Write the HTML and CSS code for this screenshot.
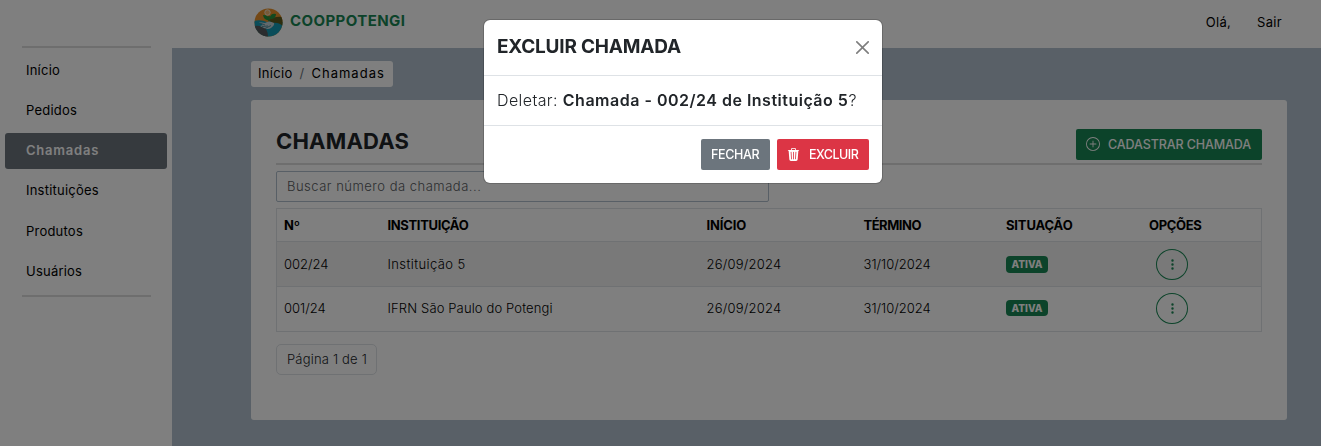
FILE: index.html
```html
<!DOCTYPE html>
<html lang="pt-BR">
<head>
<meta charset="utf-8">
<title>Chamadas - COOPPOTENGI</title>
<link rel="stylesheet" href="styles.css">
</head>
<body>
<div class="app">
  <aside class="sidebar">
    <hr class="rule">
    <nav class="menu">
      <a class="menu-item">Início</a>
      <a class="menu-item">Pedidos</a>
      <a class="menu-item active">Chamadas</a>
      <a class="menu-item">Instituições</a>
      <a class="menu-item">Produtos</a>
      <a class="menu-item">Usuários</a>
    </nav>
    <hr class="rule">
  </aside>
  <div class="page">
    <header class="topbar">
      <div class="brand">
        <svg class="logo" width="29" height="29" viewBox="0 0 29 29">
          <defs><clipPath id="disc"><circle cx="14.5" cy="14.5" r="14"/></clipPath></defs>
          <g clip-path="url(#disc)">
            <rect width="29" height="29" fill="#e8912a"/>
            <path d="M0 13Q6 11 13 14Q20 11 29 14V29H0z" fill="#159ab4"/>
            <path d="M0 18Q5 17 8 19Q14 20 14 29H0z" fill="#54585c"/>
            <path d="M15 12Q20 8 29 9V19Q26 14 18 15z" fill="#5c5a1c"/>
            <path d="M5 14L11 15Q15 12.500 20 15Q21 17 17 20Q14 22 10 20L6 18L9 17z" fill="#c3d3d8"/>
            <path d="M6 15L11 17M8 18.500L14 18M11 20.500L17 17.500" stroke="#4b8797" stroke-width=".9" fill="none"/>
            <path d="M15 13V8" stroke="#188038" stroke-width="1.400"/>
            <path d="M15.500 12Q10 13 9 7Q15 7 15.500 12zM15.500 11Q16 5 22 6Q22 11.500 15.500 11z" fill="#23923d"/>
            <circle cx="13.500" cy="4.500" r="2.700" fill="#f0b46c" stroke="#efe2cc"/>
          </g>
        </svg>
        <span class="brand-name">COOPPOTENGI</span>
      </div>
      <nav class="user-nav"><span>Olá,</span><a>Sair</a></nav>
    </header>
    <main class="content">
      <div class="breadcrumb"><span>Início</span><span class="slash">/</span><span class="current">Chamadas</span></div>
      <section class="card">
        <div class="card-head">
          <h1 class="title">CHAMADAS</h1>
          <button class="btn btn-success">
            <svg width="14" height="14" viewBox="0 0 16 16" fill="currentColor"><path d="M8 15A7 7 0 1 1 8 1a7 7 0 0 1 0 14m0 1A8 8 0 1 0 8 0a8 8 0 0 0 0 16"/><path d="M8 4a.5.5 0 0 1 .5.5v3h3a.5.5 0 0 1 0 1h-3v3a.5.5 0 0 1-1 0v-3h-3a.5.5 0 0 1 0-1h3v-3A.5.5 0 0 1 8 4"/></svg>
            <span>CADASTRAR CHAMADA</span>
          </button>
        </div>
        <div class="search">Buscar número da chamada...</div>
        <table class="table">
          <colgroup><col class="c-num"><col class="c-inst"><col class="c-start"><col class="c-end"><col class="c-status"><col></colgroup>
          <thead>
            <tr><th>Nº</th><th class="tight">INSTITUIÇÃO</th><th>INÍCIO</th><th class="tighter">TÉRMINO</th><th>SITUAÇÃO</th><th class="tight">OPÇÕES</th></tr>
          </thead>
          <tbody>
            <tr>
              <td>002/24</td><td class="wide">Instituição 5</td><td class="date">26/09/2024</td><td>31/10/2024</td>
              <td><span class="badge">ATIVA</span></td>
              <td><button class="more"><svg width="13" height="13" viewBox="0 0 16 16" fill="currentColor"><path d="M9.500 13a1.500 1.500 0 1 1-3 0 1.500 1.500 0 0 1 3 0m0-5a1.500 1.500 0 1 1-3 0 1.500 1.500 0 0 1 3 0m0-5a1.500 1.500 0 1 1-3 0 1.500 1.500 0 0 1 3 0"/></svg></button></td>
            </tr>
            <tr>
              <td>001/24</td><td class="name">IFRN São Paulo do Potengi</td><td class="date">26/09/2024</td><td>31/10/2024</td>
              <td><span class="badge">ATIVA</span></td>
              <td><button class="more"><svg width="13" height="13" viewBox="0 0 16 16" fill="currentColor"><path d="M9.500 13a1.500 1.500 0 1 1-3 0 1.500 1.500 0 0 1 3 0m0-5a1.500 1.500 0 1 1-3 0 1.500 1.500 0 0 1 3 0m0-5a1.500 1.500 0 1 1-3 0 1.500 1.500 0 0 1 3 0"/></svg></button></td>
            </tr>
          </tbody>
        </table>
        <div class="pager">Página 1 de 1</div>
      </section>
    </main>
  </div>
</div>
<div class="backdrop">
  <div class="modal">
    <div class="modal-head">
      <h2 class="modal-title">EXCLUIR CHAMADA</h2>
      <svg class="close" width="13" height="13" viewBox="0 0 16 16"><path d="M.293.293a1 1 0 0 1 1.414 0L8 6.586 14.293.293a1 1 0 1 1 1.414 1.414L9.414 8l6.293 6.293a1 1 0 0 1-1.414 1.414L8 9.414l-6.293 6.293a1 1 0 0 1-1.414-1.414L6.586 8 .293 1.707a1 1 0 0 1 0-1.414"/></svg>
    </div>
    <div class="modal-body">Deletar: <strong>Chamada - 002/24 de Instituição 5</strong>?</div>
    <div class="modal-foot">
      <button class="btn btn-secondary"><span>FECHAR</span></button>
      <button class="btn btn-danger">
        <svg width="13" height="13" viewBox="0 0 16 16" fill="currentColor"><path d="M11 1.500v1h3.500a.5.5 0 0 1 0 1h-.538l-.853 10.660A2 2 0 0 1 11.115 16h-6.230a2 2 0 0 1-1.994-1.840L2.038 3.500H1.500a.5.5 0 0 1 0-1H5v-1A1.500 1.500 0 0 1 6.500 0h3A1.500 1.500 0 0 1 11 1.500m-5 0v1h4v-1a.5.5 0 0 0-.5-.5h-3a.5.5 0 0 0-.5.5M4.500 5.029l.5 8.500a.5.5 0 1 0 .998-.06l-.5-8.500a.5.5 0 1 0-.998.06m6.530-.528a.5.5 0 0 0-.528.470l-.5 8.500a.5.5 0 0 0 .998.058l.5-8.500a.5.5 0 0 0-.470-.528M8 4.500a.5.5 0 0 0-.5.5v8.500a.5.5 0 0 0 1 0V5a.5.5 0 0 0-.5-.5"/></svg>
        <span>EXCLUIR</span>
      </button>
    </div>
  </div>
</div>
</body>
</html>
```

FILE: styles.css
```css
* { box-sizing: border-box; }
body {
  margin: 0;
  font: 400 13px/20px Inter, sans-serif;
  color: #000;
  overflow: hidden;
}
h1, h2 { margin: 0; }
button { font: inherit; margin: 0; }
svg { display: block; flex: none; }

.app { display: flex; height: 446px; }

/* Sidebar */
.sidebar { width: 172px; padding: 46px 5px 0; background: #fff; }
.rule { height: 2px; margin: 0 16px 0 17px; border: 0; background: #dcdcdc; }
.menu { display: flex; flex-direction: column; gap: 4.2px; padding: 4.500px 0 5.500px; letter-spacing: .22px; }
.menu-item { height: 36px; padding: 7.400px 21px; border-radius: 3px; }
.menu-item.active { background: #6c757d; color: #fff; font-weight: 600; letter-spacing: .78px; }

/* Top bar */
.page { flex: 1; display: flex; flex-direction: column; background: #b2c1ce; }
.topbar {
  display: flex; justify-content: space-between; align-items: center;
  height: 48px; padding: 0 39px 4px 82px; background: #fff;
}
.brand { display: flex; align-items: center; gap: 7px; }
.brand-name { padding-bottom: 3px; font-size: 15px; font-weight: 700; letter-spacing: .42px; color: #198754; }
.user-nav { display: flex; gap: 26px; letter-spacing: .3px; }

/* Content */
.content { display: flex; flex-direction: column; align-items: flex-start; padding: 13px 34px 26px 79px; flex: 1; }
.breadcrumb {
  display: flex; gap: 7px; width: 142px; height: 26px; padding: 2px 7px;
  border-radius: 3px; background: #fff; letter-spacing: .3px;
}
.breadcrumb .slash { color: #6c757d; }
.breadcrumb .current { letter-spacing: 1px; }
.card {
  align-self: stretch; flex: 1; margin-top: 13px; padding: 29px 25px 0;
  border-radius: 3px; background: #fff;
}
.card-head {
  display: flex; justify-content: space-between; align-items: flex-start;
  height: 36px; border-bottom: 2px solid #dcdcdc;
}
.title { font-size: 22px; line-height: 24px; font-weight: 700; letter-spacing: .2px; color: #212529; }
.search {
  width: 493px; height: 31px; margin: 6px 0; padding: 4px 10px;
  border: 1px solid #b0bfcc; border-radius: 2px;
  font-weight: 300; letter-spacing: .5px; color: #595c5f;
}

/* Buttons */
.btn {
  display: flex; align-items: center; height: 31px; padding: 0 10px;
  border: 0; border-radius: 2px; color: #fff;
  font-size: 12.500px; font-weight: 500; letter-spacing: -.37px; white-space: nowrap;
}
.btn-success { width: 186px; gap: 8px; background: #198754; letter-spacing: -.1px; }
.btn-success svg { margin-top: -2px; }
.btn-secondary { width: 69px; background: #6c757d; }
.btn-danger { width: 92px; gap: 9px; background: #dc3545; letter-spacing: -.5px; }

/* Table */
.table { width: 986px; border-collapse: collapse; table-layout: fixed; border: 1px solid #dee2e6; }
.c-num { width: 104px; }
.c-inst { width: 319px; }
.c-start { width: 157px; }
.c-end { width: 142.500px; }
.c-status { width: 143px; }
.table th, .table td { padding: 0 7px; text-align: left; vertical-align: middle; }
.table th { height: 33px; font-weight: 700; letter-spacing: -.15px; }
.table th.tight { letter-spacing: -.35px; }
.table th.tighter { letter-spacing: -.48px; }
.table td { height: 45px; border-top: 1px solid #dee2e6; font-weight: 300; }
.table .wide { letter-spacing: .4px; }
.table .name { letter-spacing: .14px; }
.table .date { letter-spacing: .23px; }
.table tbody tr:first-child { background: #f2f2f2; }
.table tbody tr:last-child td { padding-bottom: 2px; }
.badge {
  display: block; width: 42px; height: 16px; border-radius: 4px;
  background: #198754; color: #fff; text-align: center;
  font-size: 10px; line-height: 16px; font-weight: 800;
}
.table tbody tr:first-child .badge { height: 17px; line-height: 17px; }
.more {
  display: flex; align-items: center; justify-content: center;
  width: 32px; height: 31px; margin-left: 7px; padding: 0;
  border: 1px solid #198754; border-radius: 50%; background: none; color: #198754;
}
.pager {
  width: 101px; height: 31px; margin-top: 12px; padding: 4px 10px;
  border: 1px solid #dee2e6; border-radius: 5px;
  font-weight: 300; letter-spacing: .19px; color: #212529; white-space: nowrap;
}

/* Modal */
.backdrop {
  position: fixed; inset: 0; display: flex; justify-content: center; align-items: flex-start;
  padding: 19px 0 0 45px; background: rgba(0, 0, 0, .5);
}
.modal {
  width: 400px; border: 1px solid rgba(0, 0, 0, .175); border-radius: 7px;
  background: #fff; background-clip: padding-box; color: #212529;
}
.modal-head {
  display: flex; justify-content: space-between; align-items: center;
  height: 56px; padding: 0 13px; border-bottom: 1px solid #dee2e6;
}
.modal-title { padding-bottom: 2px; font-size: 19px; line-height: 24px; font-weight: 700; letter-spacing: -.2px; }
.close { fill: #000; opacity: .5; }
.modal-body {
  height: 50px; padding: 12px 13px; border-bottom: 1px solid #dee2e6;
  font-size: 16px; line-height: 25px; font-weight: 300; letter-spacing: .4px; white-space: nowrap;
}
.modal-body strong { font-weight: 600; letter-spacing: .5px; }
.modal-foot { display: flex; justify-content: flex-end; gap: 7px; height: 57px; padding: 13px; }
```
